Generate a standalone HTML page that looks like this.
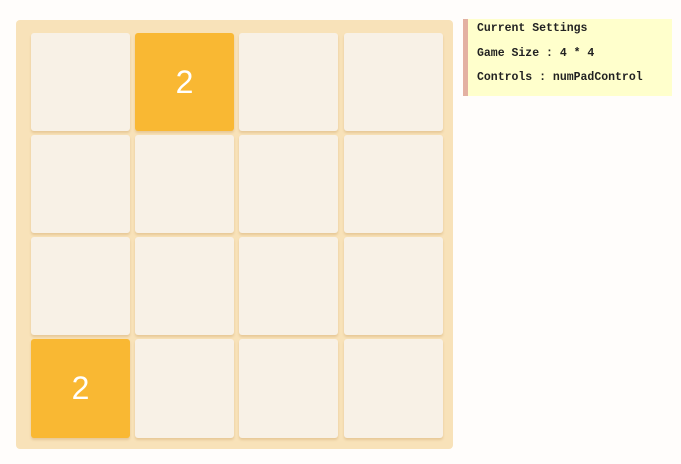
<!DOCTYPE html>
<html><head><style>
body{margin:0;width:681px;height:464px;background:#fffdfb;position:relative;overflow:hidden;font-family:"Liberation Sans",sans-serif}
#board{position:absolute;left:16px;top:20px;width:437px;height:429px;background:#f8e2b9;border-radius:4px}
.t{position:absolute;width:99px;height:98px;background:#f8f1e6;border-radius:3px;box-shadow:0 2px 2px rgba(210,170,110,.45);color:#fff;font-size:32px;line-height:98px;text-align:center}
.y{background:#f9b833}
#p{position:absolute;left:463px;top:19px;width:204px;height:77px;background:#ffffcc;border-left:5px solid #e3b1a2;font-family:"Liberation Mono",monospace;font-size:11.5px;font-weight:bold;color:#222}
#p div{position:absolute;left:9px}
</style></head><body>
<div id="board"></div>
<div class="t" style="left:31px;top:33px"></div>
<div class="t y" style="left:135px;top:33px">2</div>
<div class="t" style="left:239px;top:33px"></div>
<div class="t" style="left:344px;top:33px"></div>
<div class="t" style="left:31px;top:135px"></div>
<div class="t" style="left:135px;top:135px"></div>
<div class="t" style="left:239px;top:135px"></div>
<div class="t" style="left:344px;top:135px"></div>
<div class="t" style="left:31px;top:237px"></div>
<div class="t" style="left:135px;top:237px"></div>
<div class="t" style="left:239px;top:237px"></div>
<div class="t" style="left:344px;top:237px"></div>
<div class="t y" style="left:31px;top:339px;height:99px">2</div>
<div class="t" style="left:135px;top:339px;height:99px"></div>
<div class="t" style="left:239px;top:339px;height:99px"></div>
<div class="t" style="left:344px;top:339px;height:99px"></div>
<div id="p">
<div style="top:3px">Current Settings</div>
<div style="top:28px">Game Size : 4 * 4</div>
<div style="top:52px">Controls : numPadControl</div>
</div>
</body></html>
